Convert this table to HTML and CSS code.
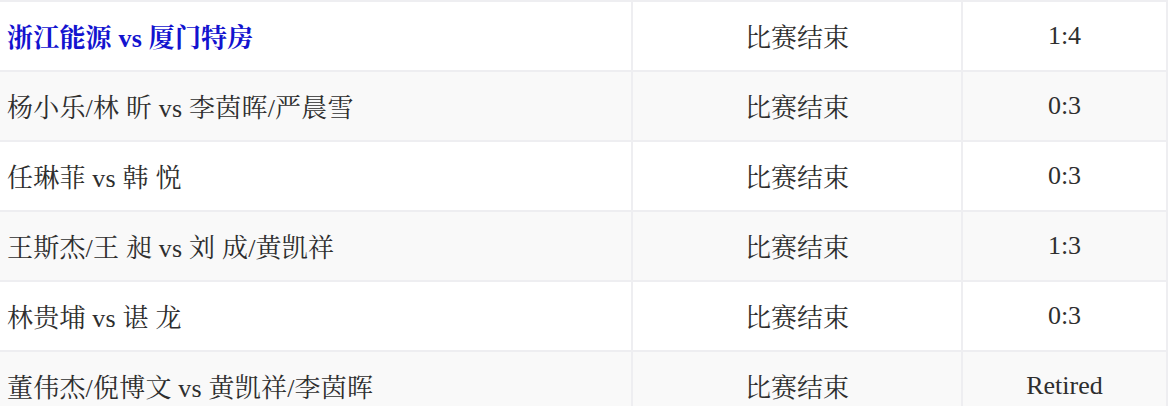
FILE: index.html
```html
<!DOCTYPE html>
<html lang="zh-CN">
<head>
<meta charset="utf-8">
<title>比赛结果</title>
<link rel="stylesheet" href="styles.css">
</head>
<body>
<div class="table">
  <div class="row">
    <div class="cell name"><a class="team" href="#">浙江能源 vs 厦门特房</a></div>
    <div class="cell status">比赛结束</div>
    <div class="cell score">1:4</div>
  </div>
  <div class="row alt">
    <div class="cell name">杨小乐/林 昕 vs 李茵晖/严晨雪</div>
    <div class="cell status">比赛结束</div>
    <div class="cell score">0:3</div>
  </div>
  <div class="row">
    <div class="cell name">任琳菲 vs 韩 悦</div>
    <div class="cell status">比赛结束</div>
    <div class="cell score">0:3</div>
  </div>
  <div class="row alt">
    <div class="cell name">王斯杰/王 昶 vs 刘 成/黄凯祥</div>
    <div class="cell status">比赛结束</div>
    <div class="cell score">1:3</div>
  </div>
  <div class="row">
    <div class="cell name">林贵埔 vs 谌 龙</div>
    <div class="cell status">比赛结束</div>
    <div class="cell score">0:3</div>
  </div>
  <div class="row alt">
    <div class="cell name">董伟杰/倪博文 vs 黄凯祥/李茵晖</div>
    <div class="cell status">比赛结束</div>
    <div class="cell score">Retired</div>
  </div>
</div>
</body>
</html>
```
FILE: styles.css
```css
html, body {
  margin: 0;
  padding: 0;
  background: #ffffff;
}

body {
  font-family: "Liberation Serif", "Noto Serif CJK SC", "Noto Sans CJK SC", serif;
  color: #2e2e2e;
  font-size: 26px;
}

.table {
  width: 1168px;
  border-top: 2px solid #eeeef1;
}

.row {
  display: grid;
  grid-template-columns: 633px 330px 205px;
  height: 70px;
  box-sizing: border-box;
  border-bottom: 2px solid #eeeef1;
  background: #ffffff;
}

.row.alt {
  background: #f9f9f9;
}

.cell {
  box-sizing: border-box;
  border-right: 2px solid #eeeef1;
  display: flex;
  align-items: center;
  padding-bottom: 1px;
  white-space: nowrap;
}

.name {
  padding-left: 7px;
  letter-spacing: 0.2px;
}

.status,
.score {
  justify-content: center;
}

.score {
  font-size: 26px;
}

.team {
  color: #1313cf;
  font-weight: bold;
  text-decoration: none;
}
```
